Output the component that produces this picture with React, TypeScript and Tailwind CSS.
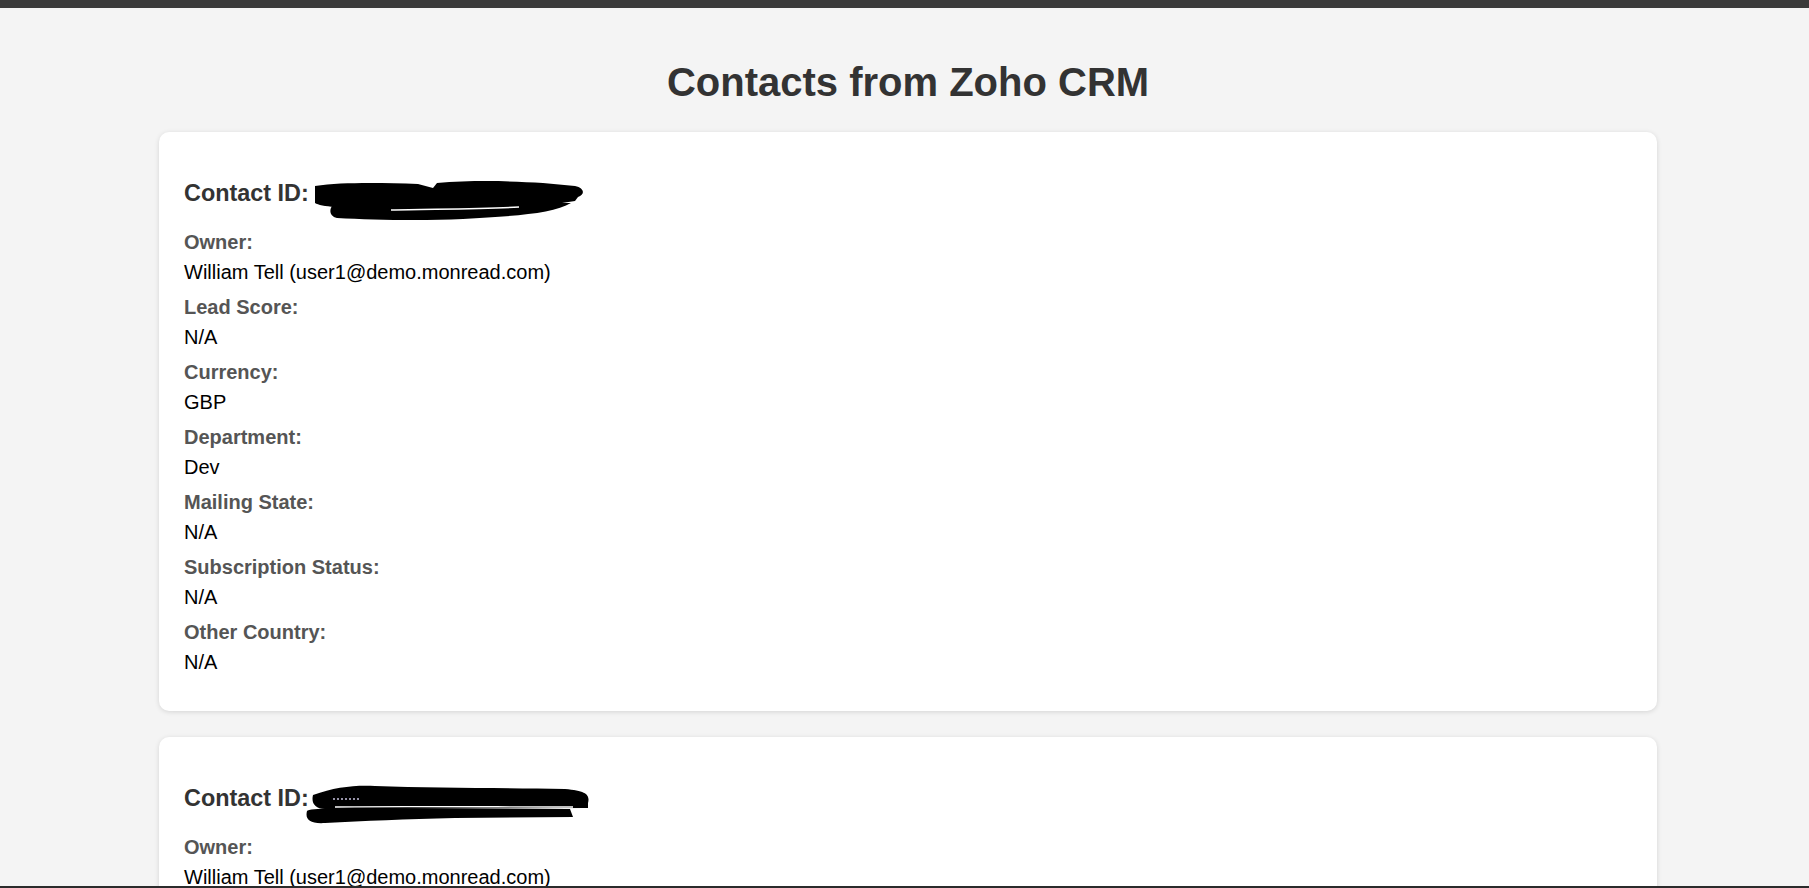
import React from "react";

type Contact = {
  owner: string;
  leadScore: string;
  currency: string;
  department: string;
  mailingState: string;
  subscriptionStatus: string;
  otherCountry: string;
};

const contacts: Contact[] = [
  {
    owner: "William Tell (user1@demo.monread.com)",
    leadScore: "N/A",
    currency: "GBP",
    department: "Dev",
    mailingState: "N/A",
    subscriptionStatus: "N/A",
    otherCountry: "N/A",
  },
  {
    owner: "William Tell (user1@demo.monread.com)",
    leadScore: "N/A",
    currency: "GBP",
    department: "Dev",
    mailingState: "N/A",
    subscriptionStatus: "N/A",
    otherCountry: "N/A",
  },
];

// marker scribble hiding the contact id
function Redaction({ variant }: { variant: number }) {
  if (variant === 0) {
    return (
      <svg
        width="272"
        height="42"
        viewBox="0 0 272 42"
        className="absolute left-[4px] top-[-19px] overflow-visible"
      >
        <path d="M4 22 L200 22" stroke="#5b2a86" strokeWidth="2" />
        <path
          d="M2 5 C30 1 70 2 105 3 L120 7 L124 2 C160 -1 200 0 230 2 L262 5 C272 7 272 14 265 16 L262 20 C240 24 220 25 200 26 L60 27 C30 27 8 26 2 22 Z"
          fill="#000"
        />
        <path
          d="M20 24 C60 22 120 23 190 22 L258 22 C240 33 200 35 150 38 C110 40 60 39 24 37 C16 35 16 28 20 24 Z"
          fill="#000"
        />
        <path d="M78 29 C120 28 170 28 206 26" stroke="#fff" strokeWidth="1.6" fill="none" />
      </svg>
    );
  }
  return (
    <svg
      width="285"
      height="42"
      viewBox="0 0 285 42"
      className="absolute left-[-4px] top-[-22px] overflow-visible"
    >
      <path
        d="M8 12 C30 4 50 2 70 3 C130 5 200 5 260 6 C282 8 285 12 283 20 L283 25 L20 26 C10 26 6 20 8 12 Z"
        fill="#000"
      />
      <path
        d="M2 28 C4 25 40 25 80 25 L265 26 L268 34 L150 35 C100 36 60 38 20 40 C4 41 0 36 2 28 Z"
        fill="#000"
      />
      <path d="M30 24 C80 23 200 24 268 24" stroke="#fff" strokeWidth="1.4" fill="none" />
      <path d="M28 16 L55 16" stroke="#c9c3e0" strokeWidth="1.5" strokeDasharray="2 2" />
    </svg>
  );
}

function Field({ label, value }: { label: string; value: string }) {
  return (
    <div className="mb-[11.9px]">
      <div className="text-[20px] leading-[23px] font-bold text-[#555] mb-[7px]">{label}</div>
      <div className="text-[20px] leading-[23px] text-black">{value}</div>
    </div>
  );
}

function ContactCard({ contact, index }: { contact: Contact; index: number }) {
  return (
    <div className="w-[1498px] bg-white rounded-[10px] shadow-[0_1px_5px_rgba(0,0,0,0.13)] px-[25px] pt-[25px] pb-[25px] mb-[26px]">
      <h3 className="text-[23.4px] leading-[26.9px] font-bold text-[#333] mt-[23.4px] mb-[24.4px]">
        Contact ID:
        <span className="relative inline-block w-[1px] h-[1px] align-baseline">
          <Redaction variant={index} />
        </span>
      </h3>
      <Field label="Owner:" value={contact.owner} />
      <Field label="Lead Score:" value={contact.leadScore} />
      <Field label="Currency:" value={contact.currency} />
      <Field label="Department:" value={contact.department} />
      <Field label="Mailing State:" value={contact.mailingState} />
      <Field label="Subscription Status:" value={contact.subscriptionStatus} />
      <Field label="Other Country:" value={contact.otherCountry} />
    </div>
  );
}

export default function App() {
  return (
    <div
      className="h-screen overflow-hidden bg-[#f4f4f4] flex flex-col"
      style={{ fontFamily: '"Liberation Sans", Arial, sans-serif' }}
    >
      <div className="h-[8px] bg-[#3b3b3b] shrink-0" />
      <div className="flex flex-col items-center pl-[7px] pt-[24px]">
        <h1 className="text-[40px] leading-[46px] font-bold text-[#333] mt-[26.8px] mb-[26.8px]">
          Contacts from Zoho CRM
        </h1>
        {contacts.map((c, i) => (
          <ContactCard key={i} contact={c} index={i} />
        ))}
      </div>
      <div className="fixed bottom-0 left-0 w-full h-[2px] bg-[#2b2b2b]" />
    </div>
  );
}
